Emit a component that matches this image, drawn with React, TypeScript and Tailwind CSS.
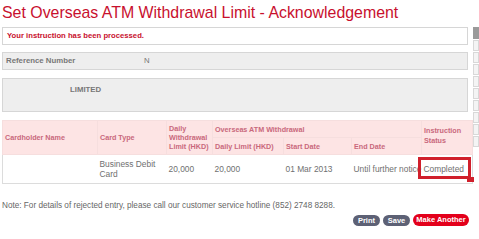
import React from 'react';

const th = 'border border-[#f6dede] px-[2px] text-left font-bold text-[#c9687c]';
const td = 'px-[2px] text-left text-[#707070]';

export default function App() {
  return (
    <div className="w-[479px] h-[239px] overflow-hidden bg-white font-['Liberation_Sans',Arial,sans-serif]">
      <h1 className="pl-[2px] pt-[3px] text-[15.9px] leading-[19px] text-[#c8102e]">
        Set Overseas ATM Withdrawal Limit - Acknowledgement
      </h1>

      <div className="flex mt-[5px]">
        <div className="w-[471px] pl-[2px]">
          <div className="w-[466px] h-[18px] border border-[#d6d6d6] bg-white pl-[4px] text-[7.7px] leading-[16px] font-bold text-[#c8102e]">
            Your instruction has been processed.
          </div>

          <div className="mt-[7px] flex w-[466px] h-[18px] border border-[#d6d6d6] bg-[#eeeeee] pl-[3px] text-[7.8px] leading-[16px] text-[#777]">
            <span className="w-[138px] font-bold">Reference Number</span>
            <span>N</span>
          </div>

          <div className="mt-[8px] w-[466px] h-[34px] border border-[#d6d6d6] bg-[#eeeeee] pl-[67px] pt-[5px] text-[7.8px] font-bold text-[#777]">
            LIMITED
          </div>

          <table className="mt-[8px] w-[470px] table-fixed border-collapse border border-[#dcdcdc] text-[7.2px] leading-[9px]">
            <colgroup>
              <col className="w-[95px]" />
              <col className="w-[69px]" />
              <col className="w-[46px]" />
              <col className="w-[71px]" />
              <col className="w-[68px]" />
              <col className="w-[70px]" />
              <col className="w-[51px]" />
            </colgroup>
            <thead className="bg-[#fde4e4]">
              <tr className="h-[17px]">
                <th rowSpan={2} className={th}>Cardholder Name</th>
                <th rowSpan={2} className={th}>Card Type</th>
                <th rowSpan={2} className={th}>Daily Withdrawal Limit (HKD)</th>
                <th colSpan={3} className={`${th} text-center`}>Overseas ATM Withdrawal</th>
                <th rowSpan={2} className={`${th} pb-[4px] leading-[10px]`}>Instruction Status</th>
              </tr>
              <tr className="h-[17px]">
                <th className={th}>Daily Limit (HKD)</th>
                <th className={th}>Start Date</th>
                <th className={th}>End Date</th>
              </tr>
            </thead>
            <tbody>
              <tr className="h-[29px] text-[8.4px] leading-[10px]">
                <td className={td}>&nbsp;</td>
                <td className={td}>Business Debit Card</td>
                <td className={td}>20,000</td>
                <td className={td}>20,000</td>
                <td className={td}>01 Mar 2013</td>
                <td className={`${td} whitespace-nowrap`}>Until further notice</td>
                <td className={`${td} relative`}>
                  <span>Completed</span>
                  <span className="absolute left-[-4px] top-[2px] w-[53px] h-[22px] border-[3px] border-[#d0202c]" />
                  <span className="absolute left-[45px] top-[22px] w-[7px] h-[5px] bg-[#d0202c]" />
                </td>
              </tr>
            </tbody>
          </table>

          <p className="mt-[17px] text-[8.2px] leading-[10px] text-[#666]">
            Note: For details of rejected entry, please call our customer service hotline (852) 2748 8288.
          </p>

          <div className="mt-[3px] flex items-center justify-end gap-[3px] pr-[2px]">
            <button className="h-[11px] w-[27px] rounded-full bg-[#5d6175] text-[7.5px] font-bold leading-[11px] text-white">Print</button>
            <button className="h-[11px] w-[27px] rounded-full bg-[#5d6175] text-[7.5px] font-bold leading-[11px] text-white">Save</button>
            <button className="h-[12px] w-[56px] rounded-full bg-[#e3001b] text-[7.5px] font-bold leading-[12px] text-white">Make Another</button>
          </div>
        </div>

        <div className="ml-[2px] flex flex-col gap-[1px] w-[20px]">
          <div className="h-[12px] bg-[#9a9a9a]" />
          {Array.from({ length: 9 }).map((_, i) => (
            <div key={i} className="h-[11px] border border-[#d8d8d8] bg-[#f4f4f4]" />
          ))}
        </div>
      </div>
    </div>
  );
}
